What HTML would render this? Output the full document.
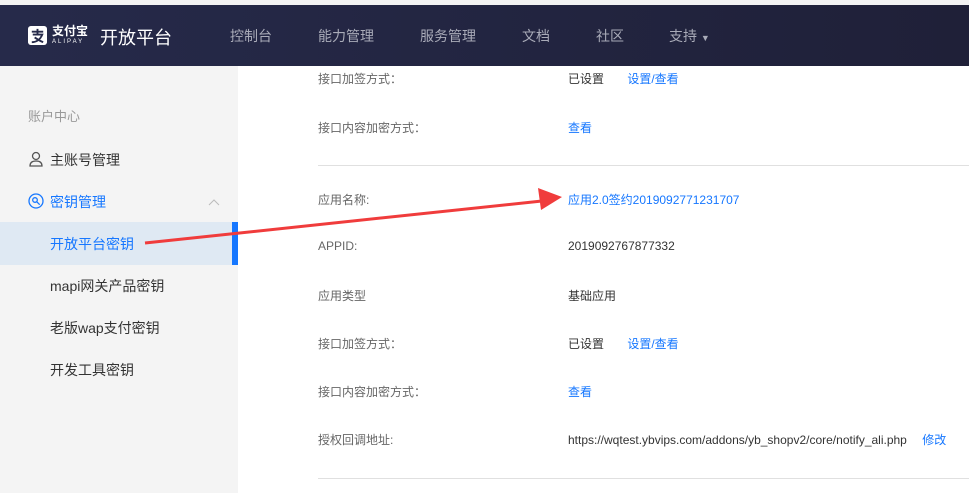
<!DOCTYPE html>
<html><head><meta charset="utf-8"><style>
*{margin:0;padding:0;box-sizing:border-box}
body{width:969px;height:493px;overflow:hidden;background:#fff;font-family:"Liberation Sans","Noto Sans CJK SC",sans-serif;position:relative}
.top{position:absolute;left:0;top:0;width:969px;height:5px;background:#f3f3f3}
.hdr{position:absolute;left:0;top:5px;width:969px;height:61px;background:linear-gradient(90deg,#262a4a,#1f2038)}
.hdr .t{position:absolute;color:#fff;font-size:18px;top:19px}
.nav{position:absolute;top:21px;color:#a9abb8;font-size:14px}
.side{position:absolute;left:0;top:66px;width:238px;height:427px;background:#f4f4f4}
.s{position:absolute;font-size:14px;color:#333}
.lb{position:absolute;left:318px;font-size:12px;color:#666}
.vl{position:absolute;left:568px;font-size:12px;color:#333}
.lk{color:#1677ff}
.hr{position:absolute;left:318px;width:651px;height:1px;background:#e0e0e0}
</style></head><body>
<div class="top"></div>
<div class="hdr">
 <svg style="position:absolute;left:28px;top:21px" width="19" height="19" viewBox="0 0 20 20"><rect width="20" height="20" rx="3" fill="#fff"/><path d="M4 6h12M10 3v6M5 9h10c-2 5-6 8-11 8M7 12c3 2 6 4 9 5" stroke="#262a4a" stroke-width="2" fill="none"/></svg>
 <div style="position:absolute;left:52px;top:20px;color:#fff;font-size:12px;font-weight:bold;line-height:13px">支付宝</div>
 <div style="position:absolute;left:52px;top:34px;color:#fff;font-size:6px;letter-spacing:2px;line-height:7px">ALIPAY</div>
 <div class="t" style="left:100px">开放平台</div>
 <div class="nav" style="left:230px">控制台</div>
 <div class="nav" style="left:318px">能力管理</div>
 <div class="nav" style="left:420px">服务管理</div>
 <div class="nav" style="left:522px">文档</div>
 <div class="nav" style="left:596px">社区</div>
 <div class="nav" style="left:669px">支持 <span style="font-size:9px">▼</span></div>
</div>
<div class="side">
 <div class="s" style="left:28px;top:40px;color:#999;font-size:13px">账户中心</div>
 <svg style="position:absolute;left:29px;top:85px" width="14" height="16" viewBox="0 0 14 16"><circle cx="7" cy="5" r="3.5" stroke="#555" fill="none" stroke-width="1.3"/><path d="M1 15c0-4 3-5 6-5s6 1 6 5z" stroke="#555" fill="none" stroke-width="1.3"/></svg>
 <div class="s" style="left:50px;top:84px">主账号管理</div>
 <svg style="position:absolute;left:28px;top:127px" width="16" height="16" viewBox="0 0 16 16"><circle cx="8" cy="8" r="7" stroke="#1677ff" fill="none" stroke-width="1.3"/><circle cx="7" cy="7" r="2.3" stroke="#1677ff" fill="none" stroke-width="1.3"/><path d="M8.7 8.7l3 3" stroke="#1677ff" stroke-width="1.3"/></svg>
 <div class="s" style="left:50px;top:126px;color:#1677ff">密钥管理</div>
 <svg style="position:absolute;left:208px;top:132px" width="12" height="8"><path d="M1 7l5-5 5 5" stroke="#bbb" fill="none"/></svg>
 <div style="position:absolute;left:0;top:156px;width:238px;height:43px;background:#dfe9f3"></div>
 <div style="position:absolute;left:232px;top:156px;width:6px;height:43px;background:#1677ff"></div>
 <div class="s" style="left:50px;top:168px;color:#1677ff">开放平台密钥</div>
 <div class="s" style="left:50px;top:210px">mapi网关产品密钥</div>
 <div class="s" style="left:50px;top:252px">老版wap支付密钥</div>
 <div class="s" style="left:50px;top:294px">开发工具密钥</div>
</div>
<div class="lb" style="top:70px">接口加签方式：</div>
<div class="vl" style="top:70px">已设置 <span class="lk" style="margin-left:20px">设置/查看</span></div>
<div class="lb" style="top:119px">接口内容加密方式：</div>
<div class="vl lk" style="top:119px">查看</div>
<div class="hr" style="top:165px"></div>
<div class="lb" style="top:191px">应用名称:</div>
<div class="vl lk" style="top:191px">应用2.0签约2019092771231707</div>
<div class="lb" style="top:239px">APPID:</div>
<div class="vl" style="top:239px">2019092767877332</div>
<div class="lb" style="top:287px">应用类型</div>
<div class="vl" style="top:287px">基础应用</div>
<div class="lb" style="top:335px">接口加签方式：</div>
<div class="vl" style="top:335px">已设置 <span class="lk" style="margin-left:20px">设置/查看</span></div>
<div class="lb" style="top:383px">接口内容加密方式：</div>
<div class="vl lk" style="top:383px">查看</div>
<div class="lb" style="top:431px">授权回调地址:</div>
<div class="vl" style="top:431px">https://wqtest.ybvips.com/addons/yb_shopv2/core/notify_ali.php <span class="lk" style="margin-left:12px">修改</span></div>
<div class="hr" style="top:478px"></div>
<svg style="position:absolute;left:0;top:0" width="969" height="493"><path d="M145 243L542 201" stroke="#f03c3c" stroke-width="3"/><path d="M562 197L538 188L541 210Z" fill="#f03c3c"/></svg>
</body></html>
